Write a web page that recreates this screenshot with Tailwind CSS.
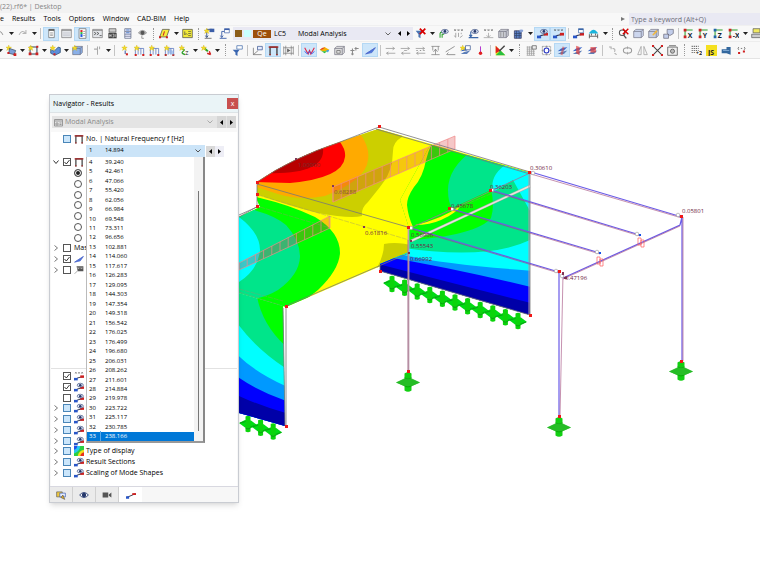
<!DOCTYPE html>
<html lang="en">
<head>
    <meta charset="UTF-8">
    <meta name="viewport" content="width=device-width, initial-scale=1.0">
    <title>(22).rf6* | Desktop</title>
    <script src="https://cdn.jsdelivr.net/npm/@tailwindcss/browser@4"></script>
</head>
<body class="min-h-screen flex flex-col overflow-x-hidden bg-white font-['Open_Sans','Noto_Sans',sans-serif] text-[7px] leading-[10px] text-black">
    <header class="bg-[#f8f8f8]">
        <div class="h-[13px] pt-[2px] bg-[#f2f2f2] text-[#858585]">(22).rf6* | Desktop</div>
        <div class="h-[13px] flex items-center justify-between border-b border-[#f0f0f0]">
            <nav class="flex items-center gap-2">
                <a href="#">e</a>
                <a href="#">Results</a>
                <a href="#">Tools</a>
                <a href="#">Options</a>
                <a href="#">Window</a>
                <a href="#">CAD-BIM</a>
                <a href="#">Help</a>
            </nav>
            <div class="flex items-center gap-1">
                <svg class="size-1" viewBox="0 0 4 4"><path d="M0 0 4 2 0 4Z" fill="#777"/></svg>
                <input type="text" aria-label="Search" placeholder="Type a keyword (Alt+Q)" class="w-[131px] h-[12px] px-[2px] bg-[#e9e9f3] placeholder:text-[#6c6c78] outline-none">
            </div>
        </div>
        <div class="h-4 flex items-center border-b border-[#ededed]">
            <div id="bar1" class="-ml-2 flex items-center shrink-0"></div>
            <div class="w-[180px] ml-px h-[13px] flex items-center shrink-0 bg-[#e9e9f3]">
                <div class="flex items-center gap-[2px] pl-[2px]">
                    <span class="size-[7px] bg-[#8b5e1a]"></span>
                    <span class="size-[7px] bg-[#c8ffff]"></span>
                    <span class="w-[18px] h-[8px] bg-[#9c4e0c] text-white text-center leading-[8px]">Qe</span>
                </div>
                <label for="lc" class="w-[27px] pl-[3px]">LC5</label>
                <div class="relative flex-1">
                    <select id="lc" class="appearance-none w-full outline-none"><option>Modal Analysis</option></select>
                    <svg class="absolute right-1 top-[3px] w-[6px] h-[4px] pointer-events-none" viewBox="0 0 6 4"><path d="M.5.5 3 3 5.5.5" fill="none" stroke="#666"/></svg>
                </div>
                <button aria-label="Previous load case" class="w-[9px] flex justify-center"><svg class="w-[3px] h-[5px]" viewBox="0 0 3 5"><path d="M3 0V5L0 2.500Z"/></svg></button>
                <button aria-label="Next load case" class="w-[9px] flex justify-center"><svg class="w-[3px] h-[5px]" viewBox="0 0 3 5"><path d="M0 0V5L3 2.500Z"/></svg></button>
            </div>
            <div id="bar2" class="flex items-center shrink-0"></div>
        </div>
        <div class="h-[17px] flex items-center border-b border-[#e4e4e4]">
            <div id="bar3" class="-ml-[3px] flex items-center shrink-0"></div>
        </div>
    </header>

    <main class="relative flex-1">
        <svg class="block w-full h-auto" viewBox="0 59 760 511" font-size="6" fill="none">
            <defs>
                <g id="support">
                    <path d="M-12 .5-4-3H4L12 .5 4 4H-4Z" fill="#17c517"/>
                    <path d="M-3.500-8.500Q0-11 3.500-8.500V8.500Q0 11-3.500 8.500Z" fill="#12cf12"/>
                    <path d="M-3.500-4Q0-2 3.500-4M-3.500 4Q0 6 3.500 4" stroke="#0aa80a"/>
                    <path d="M-12 .5-4-3.500H4L12 .5 4 4H-4Z" fill="#2eb82e" opacity=".7"/>
                </g>
                <g id="wallsupport">
                    <path d="M-9-1-3-4 3-3.500 9 1 3 4-3 3.500Z" fill="#00dc14"/>
                    <path d="M-2.500-7.500Q0-9 2.500-7.500V7.500Q0 9-2.500 7.500Z" fill="#0bd40b"/>
                    <path d="M-8-1-2.500-2.500M2.500 3 8 1M-2.500 4Q0 6 2.500 4" stroke="#0aa014"/>
                </g>
                <clipPath id="roof"><path d="M257 182Q292 158 340 142L378 129 530 172V190L411 240V253L286 307 239 293V217L260 207 257 200Z"/></clipPath>
                <clipPath id="back"><path d="M409 228 400 200 433 140 530 172V315L380 271V264L409 252Z"/></clipPath>
                <clipPath id="front"><path d="M239 293 283 306 285 426 239 413Z"/></clipPath>
                <clipPath id="ridge"><path d="M376 129 530 173V315H376Z"/></clipPath>
            </defs>

            <!-- wall supports behind the surfaces -->
            <g id="supports"></g>

            <!-- roof -->
            <g clip-path="url(#roof)">
                <path d="M230 110H540V320H230Z" fill="#ff0"/>
                <path d="M257 120H410L402 137Q393 142 393 151L392 163Q389 176 380 187L368 202Q361 208 362 216Q350 219 318 213Q290 206 250 192Z" fill="#cccf00"/>
                <path d="M250 120H355L361 135Q370 148 368 160 366 180 325 196 300 201 278 194L250 185Z" fill="#fa0"/>
                <path d="M250 120H335L340 142Q346 150 345 157 343 178 290 183L250 182Z" fill="#f00"/>
                <path d="M255 150 320 135 323 148Q326 175 265 173Z" fill="#b80000"/>
                <path d="M230 190 260 198Q290 205 315 217 340 232 340 253 339 270 318 290L286 315H230Z" fill="#0f0"/>
                <path d="M230 200 257 211Q275 216 286 225 300 240 300 257 299 275 278 290 268 296 255 299L230 310Z" fill="#00e58a"/>
                <path d="M230 210 239 217Q260 233 260 250 258 274 230 287Z" fill="#0ff"/>
                <path d="M377 268Q384 255 384 244 397 241 415 246V270Z" fill="#cccf00"/>
            </g>

            <!-- back wall -->
            <g clip-path="url(#ridge)">
                <g clip-path="url(#back)">
                    <path d="M375 120H540V320H375Z" fill="#0f0"/>
                    <path d="M395 135H436Q429 148 426 160 423 177 414 187 407 197 407 205 408 216 413 227L395 240Z" fill="#ff0"/>
                    <path d="M415 225Q442 219 460 206 458 212 441 220 430 225 415 225Z" fill="#ff0"/>
                    <path d="M473 150Q448 168 448 190 448 202 452 208L491 190Q495 205 491 218 478 235 405 241V260H540V150Z" fill="#00e58a"/>
                    <path d="M508 163Q489 175 493 192L513 180 530 211V150Z" fill="#0ff"/>
                    <path d="M370 242Q480 264 530 240V290H370Z" fill="#0ff"/>
                    <path d="M370 248Q390 252 408 256 450 265 535 271V300L370 270Z" fill="#0099ff"/>
                    <path d="M370 254Q450 267 535 288V320L370 280Z" fill="#00f"/>
                    <path d="M370 262 535 304V330H370Z" fill="#0000a8"/>
                </g>
            </g>

            <!-- front wall -->
            <g clip-path="url(#front)">
                <path d="M235 285H290V430H235Z" fill="#00e58a"/>
                <path d="M256 290Q260 325 290 350V290Z" fill="#0f0"/>
                <path d="M235 320Q255 349 290 371V430H235Z" fill="#0ff"/>
                <path d="M235 352Q253 372 290 388V430H235Z" fill="#0099ff"/>
                <path d="M235 375Q258 392 290 402V430H235Z" fill="#00f"/>
                <path d="M235 394Q262 407 290 414V430H235Z" fill="#0000a8"/>
            </g>

            <!-- hatched line results -->
            <g id="hatch" stroke="#f08a8a" stroke-width=".7" fill="#d9303045"></g>

            <!-- edges -->
            <g stroke="#777" stroke-width=".8">
                <path d="M257 182Q292 158 340 142L379 127 530 172V315M376 129 530 174M257 184 411 228M257 182V207L239 215M260 205 239 217M409 253 286 306V426M283 308 285 426M380 266V271L530 315"/>
                <path d="M258 195 409 240M260 207 330 228M239 289 283 301M239 292 280 305M409 228 500 190" stroke="#99906c" stroke-dasharray="5 1" stroke-width=".4"/>
            </g>
            <path d="M411 228 530 173" stroke="#979" stroke-width=".8"/>
            <path d="M411 241 530 186" stroke="#a9a9a9" stroke-width="2.500"/>
            <path d="M411 241 530 186" stroke="#e9e9dc" stroke-width="1.500"/>
            <path d="M529 173V315" stroke="#b09aa8"/>

            <!-- members -->
            <g stroke="#6a5be8" stroke-width="1.200">
                <path d="M411 228 559 272M452 209 600 253M491 190 640 235M531 172 682 217M682 217V361M559 272V417M682 217 680 225 563 278"/>
            </g>
            <g stroke="#a0487a" stroke-width=".6">
                <path d="M411 229 559 273M452 210 600 254M491 191 640 236M531 174 682 218M563 274 560 417M563 279 680 226M683 217V361"/>
            </g>
            <path d="M408.500 228V371" stroke="#c3a4b4" stroke-width="1.800"/>
            <path d="M408 240V371" stroke="#8d4d70" stroke-width=".5"/>
            <path d="M597 257h3v7h-3zM600 259h3v7h-3zM638 238h3v7h-3zM641 240h3v7h-3z" stroke="#ff5a5a" stroke-width=".7"/>

            <use href="#support" x="408" y="382"/>
            <use href="#support" x="559" y="427"/>
            <use href="#support" x="681" y="371"/>

            <g fill="#fff" stroke="#999" stroke-width=".6">
                <circle cx="411" cy="228" r="1.800"/><circle cx="452" cy="209" r="1.800"/><circle cx="492" cy="190" r="1.800"/><circle cx="533" cy="173" r="1.800"/>
                <circle cx="556" cy="271" r="1.800"/><circle cx="597" cy="252" r="1.800"/><circle cx="637" cy="234" r="1.800"/><circle cx="678" cy="215" r="1.800"/><circle cx="562" cy="276" r="1.800"/>
            </g>
            <path d="M378 125h3v3h-3zM256 181h3v3h-3zM256 193h3v3h-3zM256 205h3v3h-3zM407 226h3v3h-3zM448 207h3v3h-3zM489 189h3v3h-3zM528 171h3v3h-3zM379 270h3v3h-3zM529 314h3v3h-3zM285 305h3v3h-3zM285 425h3v3h-3zM407 370h3v3h-3zM558 270h3v3h-3zM680 215h3v3h-3zM680 360h3v3h-3zM558 415h3v3h-3z" fill="#f01818"/>
            <path d="M599 252h2v2h-2zM639 234h2v2h-2z" fill="#1550e8"/>
            <path d="M295 158h2v2h-2zM332 185h2v2h-2zM363 226h2v2h-2zM408 252h2v2h-2zM410 240h2v2h-2zM562 272h2v3h-2zM564 277h3v2h-3z" fill="#803858"/>

            <g fill="#6e2542">
                <text x="298" y="167" fill="#6e3030">1.00000</text>
                <text x="334" y="194" fill="#85543c">0.68288</text>
                <text x="365" y="235">0.61816</text>
                <text x="451" y="208">0.45678</text>
                <text x="490" y="189">0.36203</text>
                <text x="530" y="170">0.30610</text>
                <text x="411" y="237">0.56906</text>
                <text x="411" y="248">0.55543</text>
                <text x="410" y="261">0.66992</text>
                <text x="565" y="280">0.47196</text>
                <text x="682" y="213">0.05801</text>
            </g>
        </svg>

        <section class="absolute left-[49px] top-[35px] w-[190px] flex flex-col bg-[#f8f8f8] border border-[#c9ccd2] shadow-md">
            <div class="h-[18px] flex items-center justify-between pl-[3px] bg-[#eaf4f7] border-b border-[#dde3e6]">
                <h1>Navigator - Results</h1>
                <button aria-label="Close" class="size-[11px] bg-[#c8504f] text-white leading-[9px]">x</button>
            </div>
            <div class="flex items-center h-[12px] mx-[2px] mt-[3px] bg-[#e4e4e4] text-[#8a8a8a]">
                <svg class="ml-[2px] size-[9px]" viewBox="0 0 9 9"><path d="M.5 1.500h8v6.500h-8zM.5 3h8M2 5h2v2H2zM5.500 5H7.500M5.500 6.500H7.500" fill="none" stroke="#999"/></svg>
                <div class="relative flex-1">
                    <select aria-label="Analysis type" disabled class="appearance-none w-full pl-[2px]"><option>Modal Analysis</option></select>
                    <svg class="absolute right-1 top-[3px] w-[6px] h-[4px]" viewBox="0 0 6 4"><path d="M.5.5 3 3 5.500.5" fill="none" stroke="#aaa"/></svg>
                </div>
                <button aria-label="Previous" class="w-[9px] h-full bg-[#d6d6d6] flex items-center justify-center"><svg class="w-[3px] h-[5px]" viewBox="0 0 3 5"><path d="M3 0V5L0 2.500Z"/></svg></button>
                <button aria-label="Next" class="w-[9px] h-full ml-px bg-[#d6d6d6] flex items-center justify-center"><svg class="w-[3px] h-[5px]" viewBox="0 0 3 5"><path d="M0 0V5L3 2.500Z"/></svg></button>
            </div>
            <div class="mt-1 mx-px bg-white">
                <div id="treeHead" class="h-[13px] flex flex-col"></div>
                <div class="relative h-[12px] ml-[35px] flex items-center">
                    <div class="relative w-[119px] h-full bg-[#cbe4f8]">
                        <select aria-label="Natural frequency" class="appearance-none w-full pl-[3px] text-[6px] outline-none"><option>1 &nbsp; &nbsp; &nbsp; &nbsp;14.894</option></select>
                        <svg class="absolute right-1 top-1 w-[6px] h-[4px] pointer-events-none" viewBox="0 0 6 4"><path d="M.5.5 3 3 5.500.5" fill="none" stroke="#555"/></svg>
                    </div>
                    <button aria-label="Previous mode" class="w-[9px] h-[11px] ml-px bg-[#d9d9d9] flex items-center justify-center"><svg class="w-[3px] h-[5px]" viewBox="0 0 3 5"><path d="M3 0V5L0 2.500Z"/></svg></button>
                    <button aria-label="Next mode" class="w-[9px] h-[11px] bg-[#eeeef6] flex items-center justify-center"><svg class="w-[3px] h-[5px]" viewBox="0 0 3 5"><path d="M0 0V5L3 2.500Z"/></svg></button>
                    <!-- open drop-down list -->
                    <div class="absolute left-0 top-full z-10 w-[119px] flex bg-white border-l border-[#bbb] border-r-2 border-b-2 border-r-[#888] border-b-[#999]">
                        <ul id="modes" role="listbox" class="flex-1 h-[284px] flex flex-col text-[6px]"></ul>
                        <div class="w-[9px] bg-[#f3f3f3] flex justify-center pt-[34px] pb-[10px]"><span class="w-px bg-[#777]"></span></div>
                    </div>
                </div>
                <div id="treeTop" class="h-[118px] flex flex-col"></div>
                <div class="h-[93px]"></div>
                <div id="treeBottom" class="h-[110px] pt-[2px] flex flex-col border-t border-[#e2e2e2]"></div>
                <div class="h-[8px]"></div>
            </div>
            <div id="tabs" class="h-4 flex bg-[#f7f7f7] border-t border-[#d8d8e0]"></div>
        </section>
    </main>

    <script>
        // Icon artwork, drawn on a 16 x 16 grid
        const n = 'fill="none" stroke=';
        const arr = `<path d="M4 2 12 2M4 2V13M2 11 4 14 6 11" ${n}"#334e80" stroke-width="1.300"/>`;
        const eye = `<ellipse cx="10" cy="5" rx="5" ry="3" fill="#dfe6f5" stroke="#33477a"/><circle cx="10" cy="5" r="2" fill="#26386b"/>`;
        const star = `<path d="M4 0 5 3 8 3 6 5 7 8 4 6 1 8 2 5 0 3 3 3Z" fill="#f3dc2c" stroke="#c9a800" stroke-width=".4"/>`;
        const bar = `<path d="M1 14 6 11 14 9" ${n}"#334" stroke-width="1.500"/><path d="M0 11h6v4H0z" fill="#2856c8"/><path d="M10 7h6v4h-6z" fill="#cc2020"/>`;
        const dots = `<path d="M2 4 4 2M7 4 9 2M12 4 14 2M2 2 4 4M7 2 9 4M12 2 14 4" ${n}"#444"/>`;
        const cube = c => `<path d="M1 5 4 2H15V11L12 14H1ZM1 5H12V14M12 5 15 2" fill="${c}" stroke="#667" stroke-width=".9"/>`;
        const frame = (a, b) => `<path d="M3 15V3H13V15" ${n}"${a}" stroke-width="2"/><path d="M1 3H15" ${n}"${b}" stroke-width="2"/><path d="M2 13h2v2H2zM12 13h2v2h-2z" fill="${b}"/>`;
        const load = c => `<path d="M2 5H14M2 5V14M6 5V14M10 5V14M14 5V14" ${n}"#4668b8"/><path d="M1 13h3v3H1zM12 13h3v3h-3z" fill="${c}"/>`;
        const grey = s => `<path d="M1 5H13M11 3 14 5 11 7M3 12H15M5 10 2 12 5 14" ${n}"#8a8a8a"/>${s}`;
        const axis = (t, c) => `<path d="M3 2V14M3 3H14" ${n}"#2aa02a" stroke-width="1.500"/><path d="M1 1h4v4H1zM1 11h4v4H1z" fill="${c}"/><text x="7" y="14" font-size="10" font-weight="700" fill="#123">${t}</text>`;
        const ribbon = `<path d="M1 9 6 5 15 3 10 8Z" fill="#3a66c8"/><path d="M1 13 6 10 15 8 10 13Z" fill="#5d7fb8"/>`;
        const win = s => `<path d="M1 2h14v12H1z" fill="#e4e6ea" stroke="#777"/><path d="M1 3.500H15" stroke="#777"/>${s}`;

        const icons = {
            undo: `<path d="M3 3V8H8M3 8Q9 1 13 10" ${n}"#999" stroke-width="1.500"/>`,
            redo: `<path d="M13 3V8H8M13 8Q7 1 3 10" ${n}"#b5b5b5" stroke-width="1.500"/>`,
            panel: `<path d="M4 2h8v12H4z" fill="#fff" stroke="#666"/><path d="M4 3H12" stroke="#444" stroke-width="2"/><path d="M6 7H10M6 9H10M6 11H10" stroke="#888"/>`,
            window: win('<path d="M3 7H13M3 9H13M3 11H13" stroke="#c4c8d0"/>'),
            colors: `<path d="M3 1h10v14H3z" fill="#fff" stroke="#666"/><path d="M5 3h3v3H5z" fill="#e02020"/><path d="M5 6h3v3H5z" fill="#26c040"/><path d="M5 9h3v4H5z" fill="#2050e0"/><path d="M9 5h3M9 8h3M9 11h3" stroke="#888"/>`,
            console: win('<path d="M3 6 6 8 3 10M7 6 10 8 7 10M11 11h3" fill="none" stroke="#333"/>'),
            mbc: `<path d="M3 1h10v5H3z" fill="#ccc" stroke="#555"/><path d="M2 7h12v8H2z" fill="#444"/><path d="M4 9v4M6 9v4M4 11h2M8 9h2v4H8M12 9v4" ${n}"#ddd"/>`,
            table: `<path d="M4 1h9v14H4zM4 5h9M4 9h9M4 12h9" fill="#eef" stroke="#5a6680"/><path d="M6 3h5M6 7h5" stroke="#5080c8" stroke-width="1.500"/>`,
            bulb: `<path d="M2 7Q8 0 14 7 8 13 2 7Z" fill="#bbb" stroke="#888"/><circle cx="8" cy="7" r="3" fill="#555"/><path d="M7 11V15H10" ${n}"#777"/>`,
            yellow: `<path d="M5 2H15L11 13H1Z" fill="#f6ee3c" stroke="#444"/><path d="M8 5 6 11" stroke="#c22" stroke-width="1.500"/><path d="M0 12h3v3H0zM10 12h3v3h-3z" fill="#c22"/>`,
            yellow2: `<path d="M1 2h14v12H1z" fill="#f2ea38" stroke="#444"/><path d="M4 5v5l2-2 2 2M9 5h4M9 8h4M9 11h4" ${n}"#444"/>`,
            newload: arr + star + '<path d="M8 1h7v5H8z" fill="#3c5ea8"/><path d="M1 15H11" stroke="#444"/>',
            loadarr: `<path d="M1 15H11M4 5V13M2 11 4 14 6 11M4 5H8" ${n}"#3c5ea8" stroke-width="1.300"/><path d="M8 1h7v6H8z" fill="#fff" stroke="#3c5ea8"/><path d="M8 2H15" stroke="#3c5ea8" stroke-width="2"/>`,
            filterx: `<path d="M1 4H11L8 9V15L5 13V9Z" fill="#4a74b4"/><path d="M7 1 15 9M15 1 7 9" stroke="#d80000" stroke-width="2.500"/>`,
            clip: `<path d="M3 14V8Q3 6 6 6M6 14V9H9" ${n}"#2aa02a" stroke-width="1.500"/>` + eye,
            xxx: dots + `<path d="M4 7V13M8 7V13M12 7V9M2 11 4 14M14 11 10 14" ${n}"#888"/>`,
            flag: `<path d="M4 2 15 2V10H6Z" fill="#555"/><path d="M1 14 6 9" stroke="#777"/><path d="M6 4 8 6M8 4 6 6M11 4 13 6M13 4 11 6" stroke="#fff"/>`,
            arreye: `<path d="M1 14H15M4 5V12M2 10 4 13 6 10" ${n}"#3a66a8" stroke-width="1.500"/>` + eye,
            xxxbar: dots + `<path d="M1 14H15M8 7V13M5 11 8 13 11 11" ${n}"#999"/>`,
            greycube: cube('#c9cbd2') + `<path d="M4 6V13M8 6V13" stroke="#888"/>`,
            grid: `<path d="M2 4h10v11H2z" fill="#5b80c8" stroke="#335"/><path d="M2 8H12M2 11H12M5 4V15M9 4V15" stroke="#346"/>` + '<ellipse cx="12" cy="4" rx="3" ry="2" fill="#8aa4d8"/>',
            bareye: bar + eye,
            barxxx: bar + dots,
            barwin: bar + `<path d="M8 1h7v6H8z" fill="#fff" stroke="#3a66a8"/><path d="M8 2H15" stroke="#3a66a8" stroke-width="2"/>`,
            dome: `<path d="M1 8Q8-3 15 8Z" fill="#19b4dc"/><path d="M2 9V15M14 9V15M2 12H14M5 8V11M11 8V11" ${n}"#555" stroke-width="1.300"/>`,
            findx: `<circle cx="6" cy="7" r="4" fill="#fff" stroke="#555" stroke-width="1.500"/><path d="M8 10 12 15" stroke="#555" stroke-width="2"/><path d="M7 1 15 9M15 1 7 9" stroke="#d80000" stroke-width="2"/>`,
            cube1: cube('#ccd6ee'),
            cube2: cube('#c7d0e6') + `<path d="M6 10 12 3 14 5 8 11Z" fill="#f0b840"/>`,
            cube3: `<path d="M6 2H15V8L10 11 6 8ZM1 9H8V15H1Z" fill="#c2cdea" stroke="#667"/>`,
            ax: axis('X', '#c22'), ay: axis('Y', '#c22'), az: axis('Z', '#26a'), anx: axis('-X', '#c22'),
            stack: `<path d="M3 1h10v6H3z" fill="#f2ea60" stroke="#555"/><path d="M1 9H15V14H1Z" fill="#ccc" stroke="#555"/>`,
            node: star + `<path d="M5 5 14 8 12 14 4 12Z" fill="#7d9fd8" stroke="#345"/><path d="M11 12h4v4h-4zM2 10h3v3H2z" fill="#d02020"/>`,
            rect: `<path d="M3 3h10v10H3z" ${n}"#345" stroke-width="1.500"/><path d="M1 11h4v4H1zM11 11h4v4h-4zM12 1h3v3h-3z" fill="#d02020"/>` + star,
            fold: `<path d="M1 6 6 9 12 3 15 4V11L7 15 1 12Z" fill="#5d8fdc" stroke="#246"/>` + star + '<path d="M5 12h3v3H5z" fill="#d02020"/>',
            solid: cube('#8ab0e8') + star,
            stairs: `<path d="M8 2V14M3 6H8M11 2V6" ${n}"#aaa" stroke-width="1.500"/>`,
            starload: `<g transform="translate(4)">${star}</g><path d="M9 8V13" stroke="#3c5ea8" stroke-width="1.500"/><path d="M10 12h3v3h-3z" fill="#d02020"/>`,
            l1: load('#d02020') + star, l2: load('#d02020') + star, l3: load('#b03030') + '<path d="M5 4 14 9V14L6 12Z" fill="#8ab0e8aa"/>' + star,
            spring: `<path d="M4 6Q10 6 6 9T9 14" ${n}"#2aa02a" stroke-width="2"/><text x="9" y="15" font-size="8" fill="#222">Z</text>` + star,
            force: `<path d="M5 5 10 9" stroke="#2aa02a" stroke-width="3"/><path d="M9 12 14 14M12 9 14 14" stroke="#d02020" stroke-width="2"/>` + star,
            filterwin: `<path d="M1 7H11L8 11V16L5 14V11Z" fill="#3a66b0"/><path d="M7 1h8v5H7z" fill="#fff" stroke="#3a66a8"/>`,
            axwin: `<path d="M2 4V14H14M2 14 9 8" ${n}"#666"/><path d="M8 2h7v5H8z" fill="#e5ecff" stroke="#33508c"/>`,
            frame: frame('#444', '#a22'),
            film: `<path d="M1 2V14M15 2V14M1 4H15M1 12H15M4 1V15M12 1V15" ${n}"#777"/><path d="M6 5 11 8 6 11Z" fill="#666"/>`,
            wave: `<path d="M1 4 6 13 8 8 10 13 15 4" ${n}"#e02040" stroke-width="1.500"/><path d="M1 9Q5 16 8 9 11 16 15 9" ${n}"#3a5ce8" stroke-width="1.200"/>`,
            rainbow: `<path d="M1 7 8 3 15 7 12 9 5 9Z" fill="#f4b400"/><path d="M1 7 5 9 12 9 8 12Z" fill="#2cbf3c"/><path d="M5 4 1 7 4 7 9 4Z" fill="#e8402a"/><path d="M10 8 15 7 13 11Z" fill="#3aa0f0"/>`,
            wirecube: cube('#ddd') + `<path d="M4 8H9V12H4Z" ${n}"#666"/>`,
            plus: `<path d="M5 5V15M2 8H8M10 3V8M8 5H14M3 13H7" ${n}"#8a8a8a" stroke-width="1.500"/>`,
            beam: `<path d="M1 13 15 4M1 13 10 11 15 4Z" fill="#4d78e0" stroke="#4a64c8"/>`,
            g1: grey(''), g2: grey('<path d="M6 8H10" stroke="#8a8a8a"/>'), g3: grey('<path d="M2 8H4M7 8H9M12 8H14" stroke="#666"/>'),
            g4: `<path d="M2 2H14M2 14H14M4 2V8M12 2V8M5 10 8 6 11 10M8 6V14" ${n}"#777"/>`,
            g5: `<path d="M1 10 14 2M3 14H15M5 11 2 14" ${n}"#8a8a8a" stroke-width="1.300"/>`,
            starwin: ribbon + star + `<path d="M8 1h7v6H8z" fill="#fff" stroke="#33508c"/>`,
            pin: `<path d="M8 2V11" stroke="#b53ad0" stroke-width="1.500"/><circle cx="8" cy="12" r="2.500" fill="#e02020"/>`,
            palette: `<path d="M1 1V15H15Z" fill="#e8e020"/><path d="M1 1 8 8 1 12Z" fill="#e02020"/><path d="M1 15 8 8 15 15Z" fill="#28c040"/><path d="M6 9 14 1" stroke="#444" stroke-width="2"/>`,
            gridwin: `<path d="M1 3H11M1 6H11M1 9H13M1 12H13M1 15H13M2 2V15M5 2V15M8 2V15M11 7V15" ${n}"#999"/><path d="M9 1h6v5H9z" fill="#eee" stroke="#555"/>`,
            target: `<path d="M2 2V14M14 2V14M2 2H14M2 14H14M8 1V15M1 8H15" ${n}"#777" stroke-dasharray="2 1"/><circle cx="8" cy="8" r="3.500" fill="#fff" stroke="#2030c0" stroke-width="1.500"/>`,
            planes: ribbon + '<path d="M5 14 8 2 11 3 8 15Z" fill="#d04a4a99"/>', planes2: ribbon + '<path d="M6 1 11 3V15L6 12Z" fill="#e04040bb"/>', planes3: ribbon + '<path d="M5 3h8v8H5z" fill="#e04040bb"/>',
            swap: `<path d="M3 3 6 3 6 6M8 5Q13 5 11 10M11 12 14 14" ${n}"#aaa" stroke-width="1.500"/>`,
            rotate: `<ellipse cx="8" cy="8" rx="6" ry="4" ${n}"#999" stroke-width="1.500"/><path d="M8 2V6M8 10V14" stroke="#999"/>`,
            mirror: `<path d="M6 2V14H1ZM10 2V14H15Z" ${n}"#999"/>`,
            cross: `<path d="M2 2 14 14M14 2 2 14" stroke="#444" stroke-width="1.500"/><path d="M0 0h3v3H0zM13 0h3v3h-3zM0 13h3v3H0zM13 13h3v3h-3z" fill="#d02020"/>`,
            gear: `<path d="M1 3h14v12H1z" fill="#eee" stroke="#444"/><path d="M3 1H13" stroke="#444"/><circle cx="8" cy="9" r="3" fill="#bbb" stroke="#444"/>`,
            raster: `<path d="M1 2H11M1 5H11M1 8H11M1 11H6" stroke="#555" stroke-width="1.500" stroke-dasharray="1.500 1.500"/><text x="7" y="15" font-size="8" font-weight="700" fill="#222">+2</text>`,
            js: `<path d="M0 0h16v16H0z" fill="#f5e020"/><text x="3" y="14" font-size="10" font-weight="700" fill="#222">JS</text>`,
            blocks: `<path d="M1 6H8V12H1ZM8 3H14V14L8 12Z" fill="#34689e"/><path d="M3 8H12" stroke="#9cc2e8"/>`,
            links: `<path d="M4 3Q2 5 4 7M12 3Q14 5 12 7M7 5H9" ${n}"#444"/><path d="M3 10h3v3H3zM10 8h3v3h-3z" fill="#d02020"/>`,
            heat: `<path d="M0 0h16v16H0z" fill="#2cd040"/><path d="M0 0H10Q9 9 0 12Z" fill="#28c8f0"/><path d="M0 0H5Q5 5 0 6Z" fill="#2050e8"/><path d="M16 6Q7 8 6 16H16Z" fill="#f4e020"/><path d="M16 10Q11 11 10 16H16Z" fill="#e83020"/>`,
            eye: `<path d="M1 8Q8 0 15 8 8 16 1 8Z" fill="#fff" stroke="#33477a" stroke-width="1.500"/><circle cx="8" cy="8" r="3.500" fill="#26386b"/>`,
            camera: `<path d="M1 4H10V12H1ZM11 7 15 4V12L11 9Z" fill="#555"/>`,
            folder: `<path d="M1 3h9v8H1z" fill="#f0c840" stroke="#555"/><path d="M6 5h9v6H6z" fill="#e5ecff" stroke="#2a50a8"/><path d="M8 12 11 8 14 15Z" fill="#e8b020" stroke="#555"/>`,
            bar: `<path d="M1 12 15 6" stroke="#334" stroke-width="1.500"/><path d="M0 10h5v4H0z" fill="#2856c8"/><path d="M10 5h6v3h-6z" fill="#cc2020"/>`
        };

        const svg = (name, cls) => `<svg class="${cls}" viewBox="0 0 16 16">${icons[name]}</svg>`;

        // "v" caret, "|" separator, ":" grip, "*" in front marks a pressed button
        function toolbar(id, list, caretCls, gripCls) {
            document.getElementById(id).innerHTML = list.split(' ').map(k => {
                if (k === 'v') return `<button aria-label="More" class="${caretCls}"><svg class="w-[5px] h-[3px] mx-auto" viewBox="0 0 5 3"><path d="M0 0H5L2.5 3Z" fill="#222"/></svg></button>`;
                if (k === '|') return '<span class="w-[5px] flex justify-center"><span class="w-px h-[11px] bg-[#c4c4c4]"></span></span>';
                if (k === ':') return `<span class="${gripCls}"><span class="h-[12px] border-l border-dotted border-[#999]"></span></span>`;
                if (k[0] === '*') return `<button aria-label="${k.slice(1)}" class="w-4 h-[14px] flex items-center justify-center bg-[#cde6fa] border border-[#b4d8f4]">${svg(k.slice(1), 'size-[11px] shrink-0')}</button>`;
                return `<button aria-label="${k}" class="w-[15px] h-[14px] flex items-center justify-center">${svg(k, 'size-[11px] shrink-0')}</button>`;
            }).join('');
        }
        toolbar('bar1', 'undo v redo v | *panel window *colors console mbc table bulb : yellow v yellow2 : newload loadarr', 'w-2', 'w-[7px] flex justify-center');
        toolbar('bar2', 'filterx v clip xxx arreye xxxbar greycube grid v *bareye *barxxx | barwin dome v : findx cube1 cube2 cube3 | ax ay az anx v stack', 'w-2', 'w-[7px] flex justify-center');
        toolbar('bar3', 'v node v rect v fold v solid | stairs v | starload l1 l2 l3 spring v force v : filterwin | axwin *frame film | *wave rainbow wirecube plus *beam | g1 g2 g3 g4 g5 starwin pin | palette v : gridwin target *planes planes2 planes3 | swap rotate mirror cross gear : raster js blocks links', 'w-[7px]', 'w-[9px] flex justify-center');

        // Tree rows: [expander, box, icon, label]
        const chevrons = {
            open: '<svg class="size-[6px]" viewBox="0 0 6 6"><path d="M.5 1.500 3 4.500 5.500 1.500" fill="none" stroke="#333"/></svg>',
            closed: '<svg class="size-[6px]" viewBox="0 0 6 6"><path d="M1.500.5 4.500 3 1.500 5.500" fill="none" stroke="#777"/></svg>',
            '': ''
        };
        const boxes = {
            off: '<input type="checkbox" class="appearance-none block size-2 border border-[#555] bg-white">',
            on: `<span class="relative"><input type="checkbox" checked class="peer appearance-none block size-2 border border-[#555] bg-white"><svg class="absolute inset-0 size-2 pointer-events-none hidden peer-checked:block" viewBox="0 0 8 8"><path d="M1.500 4 3.300 6 6.500 2" fill="none" stroke="#222" stroke-width=".9"/></svg></span>`,
            mixed: '<input type="checkbox" class="appearance-none block size-2 border border-[#4a86b8] bg-[#cbe6fb]">'
        };
        function tree(id, rows) {
            document.getElementById(id).innerHTML = rows.map(([exp, box, icon, label]) => {
                if (box === 'radio') return `<label class="flex-1 flex items-center pl-[23px]"><input type="radio" name="shape" aria-label="Result component" ${label ? 'checked' : ''} class="appearance-none block size-2 rounded-full border border-[#555] checked:bg-[#222] checked:shadow-[inset_0_0_0_1px_#fff]"></label>`;
                return `<label class="flex-1 min-h-0 flex items-center whitespace-nowrap"><span class="w-[12px] pl-[2px]">${chevrons[exp]}</span>${boxes[box]}${icon ? `<span class="w-[15px] flex justify-center">${svg(icon, 'size-[10px]')}</span>` : '<span class="w-[3px]"></span>'}${label}</label>`;
            }).join('');
        }
        tree('treeHead', [['', 'mixed', 'frame', 'No. | Natural Frequency f [Hz]']]);
        tree('treeTop', [
            ['open', 'on', 'frame', ''],
            ['', 'radio', '', 'checked'], ['', 'radio'], ['', 'radio'], ['', 'radio'], ['', 'radio'], ['', 'radio'], ['', 'radio'],
            ['closed', 'off', '', 'Mas'],
            ['closed', 'on', 'beam', ''],
            ['closed', 'off', 'flag', '']
        ]);
        tree('treeBottom', [
            ['', 'on', 'barxxx', ''],
            ['', 'on', 'bareye', ''],
            ['', 'off', 'bareye', ''],
            ['closed', 'mixed', 'bareye', ''],
            ['closed', 'mixed', 'bareye', ''],
            ['closed', 'mixed', 'bareye', ''],
            ['closed', 'mixed', 'bareye', 'Values on Surfaces'],
            ['closed', 'mixed', 'heat', 'Type of display'],
            ['closed', 'mixed', 'bareye', 'Result Sections'],
            ['closed', 'mixed', 'bareye', 'Scaling of Mode Shapes']
        ]);

        const freq = ['39.240', '42.461', '47.066', '55.420', '62.056', '66.984', '69.548', '73.311', '96.656', '102.881', '114.060', '117.617', '126.283', '129.095', '144.303', '147.354', '149.318', '156.542', '176.025', '176.499', '196.680', '206.031', '208.262', '211.601', '214.884', '219.978', '223.722', '225.117', '230.785', '238.166'];
        document.getElementById('modes').innerHTML = freq.map((f, i) => {
            const last = i === freq.length - 1;
            return `<li role="option" class="${last ? 'flex-1 min-h-0 flex items-center bg-[#0078d7] text-white' : 'flex-1 min-h-0 flex items-center'}"><span class="${last ? 'w-[14px] pl-[2px] border-r border-[#5aa8e8]' : 'w-[14px] pl-[2px]'}">${i + 4}</span><span class="pl-1">${f}</span></li>`;
        }).join('');

        document.getElementById('tabs').innerHTML = ['folder', 'eye', 'camera', 'bar'].map((k, i) =>
            `<button aria-label="${k}" class="${i === 3 ? 'w-[23px] bg-white flex items-center justify-center' : 'w-[23px] bg-[#ebebeb] border-r border-[#d0d0d0] flex items-center justify-center'}">${svg(k, 'size-[10px]')}</button>`).join('');

        // Supports along the two walls
        let s = '';
        for (let i = 0; i < 11; i++) s += `<use href="#wallsupport" x="${392 + i * 12.6}" y="${284 + i * 3.7}"/>`;
        for (let i = 0; i < 3; i++) s += `<use href="#wallsupport" x="${248 + i * 12.6}" y="${424 + i * 3.7}"/>`;
        document.getElementById('supports').innerHTML = s;

        // Hatched strips between a top and a bottom line
        function strip(x1, t1, b1, x2, t2, b2) {
            let d = `M${x1} ${t1}L${x2} ${t2}V${b2}L${x1} ${b1}Z`;
            for (let x = x1; x < x2; x += 8.2) {
                const k = (x - x1) / (x2 - x1);
                d += `M${x} ${t1 + (t2 - t1) * k}V${b1 + (b2 - b1) * k}`;
            }
            return `<path d="${d}"/>`;
        }
        document.getElementById('hatch').innerHTML = strip(333, 187, 202, 455, 136, 149) + strip(239, 263, 270, 330, 216, 228);
    </script>
</body>
</html>
